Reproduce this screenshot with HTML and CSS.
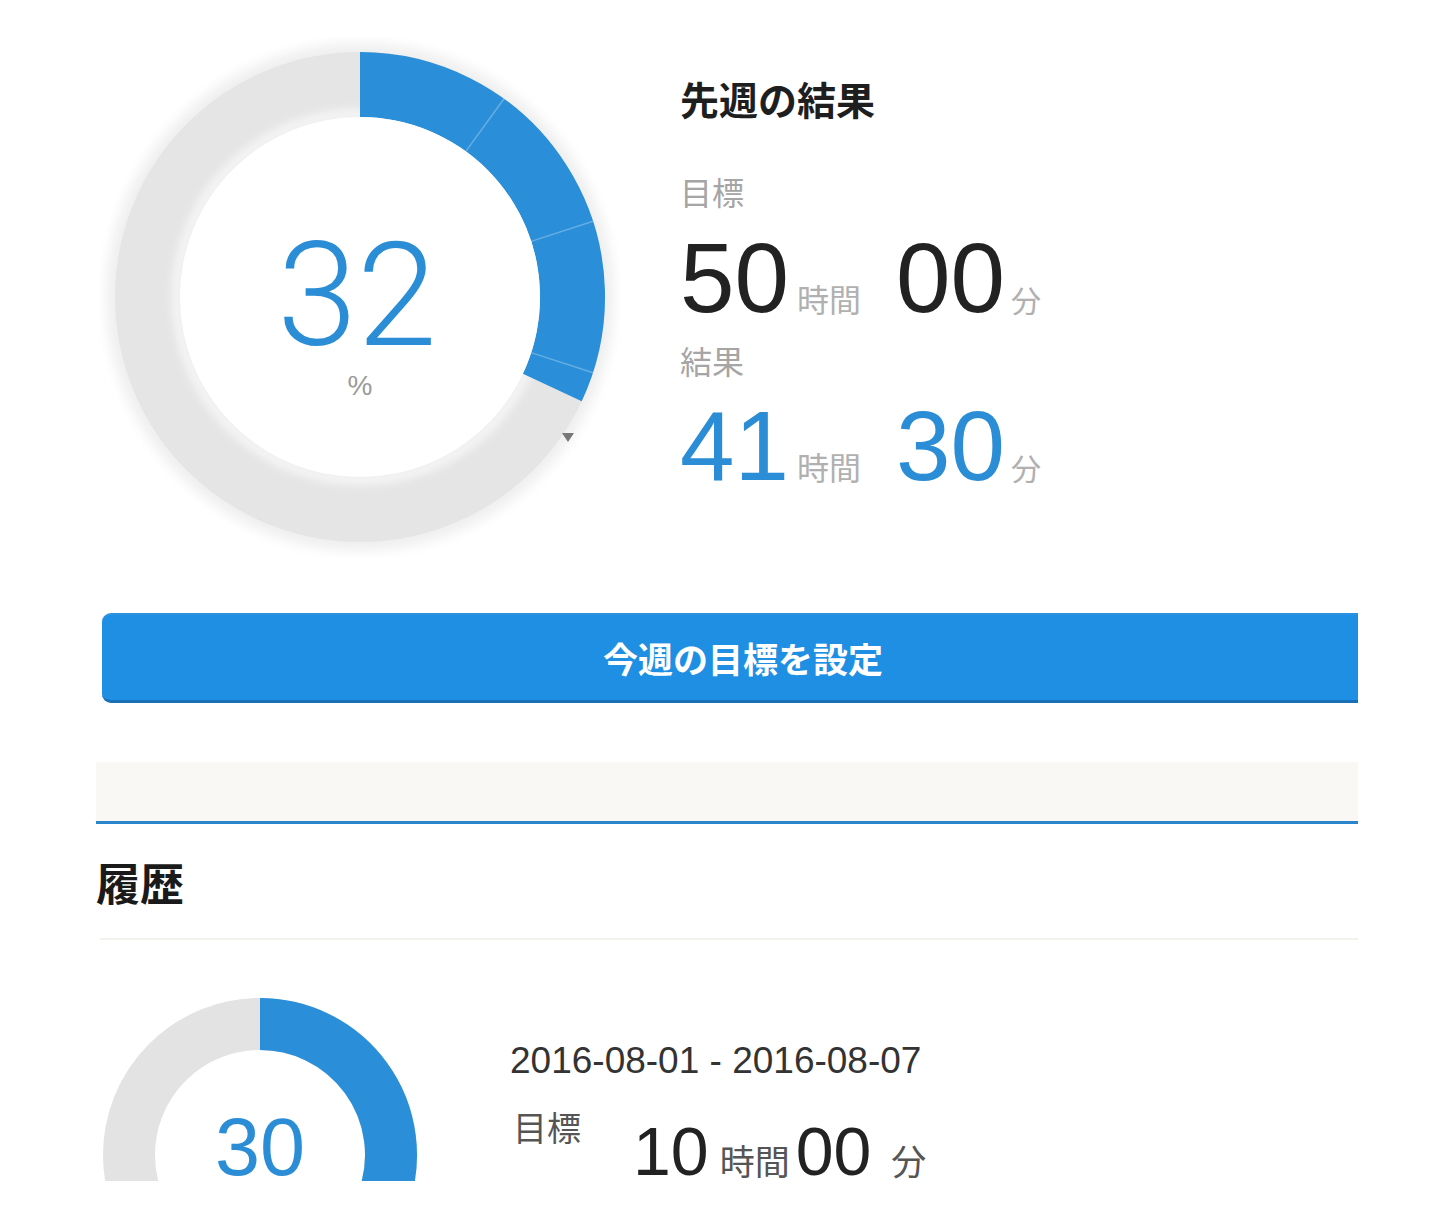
FILE: index.html
```html
<!DOCTYPE html>
<html lang="ja">
<head>
<meta charset="utf-8">
<title>先週の結果</title>
<link rel="stylesheet" href="styles.css">
</head>
<body>
<main class="page">
  <section class="summary">
    <div class="donut">
      <svg class="donut-svg" width="520" height="520" viewBox="0 0 520 520">
        <defs>
          <filter id="soft" x="-20%" y="-20%" width="140%" height="140%">
            <feGaussianBlur stdDeviation="6"/>
          </filter>
          <filter id="inner" x="-20%" y="-20%" width="140%" height="140%">
            <feGaussianBlur stdDeviation="4"/>
          </filter>
        </defs>
        <circle cx="260" cy="260" r="214" fill="none" stroke="#efefef" stroke-width="80" filter="url(#soft)"/>
        <circle cx="260" cy="260" r="212.5" fill="none" stroke="#e5e5e5" stroke-width="65"/>
        <circle cx="260" cy="260" r="183" fill="none" stroke="#f6f6f6" stroke-width="10" filter="url(#inner)"/>
        <path d="M260 47.5 A212.5 212.5 0 0 1 452.3 350.5" fill="none" stroke="#2a8fd8" stroke-width="65"/>
        <g stroke="rgba(255,255,255,0.28)" stroke-width="1.5">
          <line x1="365.8" y1="114.4" x2="404.0" y2="61.8"/>
          <line x1="431.2" y1="204.4" x2="493.0" y2="184.3"/>
          <line x1="431.2" y1="315.6" x2="493.0" y2="335.7"/>
        </g>
        <circle cx="260" cy="260" r="180" fill="#ffffff"/>
        <polygon points="462,396 474,396 468,405" fill="#777777"/>
      </svg>
      <div class="donut-label">
        <span class="donut-value">32</span>
        <span class="donut-unit">%</span>
      </div>
    </div>
    <div class="result">
      <h2 class="result-title">先週の結果</h2>
      <p class="label label-goal">目標</p>
      <div class="time-row">
        <span class="num">50</span><span class="unit">時間</span><span class="num">00</span><span class="unit unit-min">分</span>
      </div>
      <p class="label label-result">結果</p>
      <div class="time-row time-row-blue">
        <span class="num">41</span><span class="unit">時間</span><span class="num">30</span><span class="unit unit-min">分</span>
      </div>
    </div>
  </section>

  <button class="goal-button" type="button">今週の目標を設定</button>

  <div class="spacer-bar"></div>

  <h2 class="history-title">履歴</h2>
  <hr class="history-rule">

  <section class="history-item">
    <div class="gauge">
      <svg class="gauge-svg" width="320" height="183" viewBox="0 0 320 183">
        <circle cx="160" cy="157" r="131" fill="none" stroke="#e3e3e3" stroke-width="52"/>
        <path d="M160 26 A131 131 0 0 1 284.6 197.5" fill="none" stroke="#2a8fd8" stroke-width="52"/>
      </svg>
      <span class="gauge-value">30</span>
    </div>
    <div class="history-text">
      <p class="history-date">2016-08-01 - 2016-08-07</p>
      <div class="history-goal">
        <span class="h-label">目標</span>
        <span class="h-num h-num-first">10</span>
        <span class="h-unit h-unit-hour">時間</span>
        <span class="h-num">00</span>
        <span class="h-unit h-unit-min">分</span>
      </div>
    </div>
  </section>
</main>
</body>
</html>
```

FILE: styles.css
```css
* {
  box-sizing: border-box;
}

html, body {
  margin: 0;
  padding: 0;
  background: #ffffff;
}

body {
  font-family: "Liberation Sans", "Noto Sans CJK JP", sans-serif;
  color: #222222;
  width: 1448px;
  height: 1224px;
  overflow: hidden;
}

.page {
  padding-left: 96px;
  width: 1358px;
}

/* ---------- summary ---------- */
.summary {
  display: flex;
  align-items: flex-start;
}

.donut {
  position: relative;
  margin-left: 4px;
  margin-top: 37px;
  width: 520px;
  height: 520px;
  flex: none;
}

.donut-svg {
  display: block;
}

.donut-label {
  position: absolute;
  top: 187px;
  left: 0;
  right: 0;
  display: flex;
  flex-direction: column;
  align-items: center;
}

.donut-value {
  font-family: "Roboto", "Liberation Sans", sans-serif;
  font-weight: 300;
  font-size: 144px;
  line-height: 1;
  color: #2b8dd6;
  margin-right: 6px;
}

.donut-unit {
  font-family: "Liberation Sans", sans-serif;
  font-size: 28px;
  line-height: 1;
  color: #9a9a9a;
  margin-top: 4px;
}

.result {
  margin-left: 60px;
  padding-top: 79px;
}

.result-title {
  margin: 0;
  font-family: "Noto Sans CJK JP", sans-serif;
  font-weight: 700;
  font-size: 39px;
  line-height: 1;
  color: #1e1e1e;
}

.label {
  margin: 0;
  font-family: "Noto Sans CJK JP", sans-serif;
  font-size: 32px;
  line-height: 1;
  color: #a5a5a5;
}

.label-goal {
  margin-top: 57px;
}

.label-result {
  margin-top: 17px;
}

.time-row {
  display: grid;
  grid-template-columns: 117px 99px 115px auto;
  align-items: baseline;
  margin-top: 22px;
  color: #222222;
}

.time-row-blue {
  margin-top: 21px;
  color: #2b8dd6;
}

.num {
  font-family: "Liberation Sans", sans-serif;
  font-size: 98px;
  line-height: 1;
}

.unit {
  font-family: "Noto Sans CJK JP", sans-serif;
  font-size: 32px;
  line-height: 1;
  color: #b0b0b0;
}

.unit-min {
  font-size: 30px;
}

/* ---------- button ---------- */
.goal-button {
  display: block;
  margin: 56px 0 0 6px;
  width: 1256px;
  height: 90px;
  padding: 0 0 0 26px;
  border: none;
  border-top: 2px solid #2a92e3;
  border-bottom: 3px solid #1a70b6;
  border-radius: 9px 0 0 9px;
  background: #1f8fe3;
  color: #ffffff;
  font-family: "Noto Sans CJK JP", sans-serif;
  font-weight: 700;
  font-size: 35px;
  line-height: 1;
  text-align: center;
}

.spacer-bar {
  margin-top: 59px;
  height: 62px;
  background: #f9f8f5;
  border-bottom: 3px solid #2a84cc;
}

/* ---------- history ---------- */
.history-title {
  margin: 36px 0 0 0;
  font-family: "Noto Sans CJK JP", sans-serif;
  font-weight: 700;
  font-size: 44px;
  line-height: 1;
  color: #1a1a1a;
}

.history-rule {
  margin: 34px 0 0 4px;
  height: 2px;
  border: none;
  background: #f3f1ec;
}

.history-item {
  display: flex;
  align-items: flex-start;
  margin-top: 58px;
}

.gauge {
  position: relative;
  margin-left: 4px;
  width: 320px;
  height: 183px;
  flex: none;
}

.gauge-svg {
  display: block;
}

.gauge-value {
  position: absolute;
  top: 109px;
  left: 0;
  right: 0;
  text-align: center;
  font-family: "Liberation Sans", sans-serif;
  font-size: 81px;
  line-height: 1;
  color: #2b8dd6;
}

.history-text {
  margin-left: 90px;
  padding-top: 44px;
}

.history-date {
  margin: 0;
  font-family: "Liberation Sans", sans-serif;
  font-size: 37px;
  line-height: 1;
  color: #333333;
}

.history-goal {
  display: flex;
  align-items: baseline;
  margin-top: 38px;
  color: #222222;
}

.h-label {
  align-self: flex-start;
  margin-top: -7px;
  margin-left: 3px;
  font-family: "Noto Sans CJK JP", sans-serif;
  font-size: 34px;
  line-height: 1;
  color: #555555;
}

.h-num {
  font-family: "Liberation Sans", sans-serif;
  font-size: 68px;
  line-height: 1;
}

.h-num-first {
  margin-left: 52px;
}

.h-unit {
  font-family: "Noto Sans CJK JP", sans-serif;
  font-size: 35px;
  line-height: 1;
  color: #555555;
}

.h-unit-hour {
  margin-left: 11px;
  margin-right: 6px;
}

.h-unit-min {
  margin-left: 20px;
}
```
